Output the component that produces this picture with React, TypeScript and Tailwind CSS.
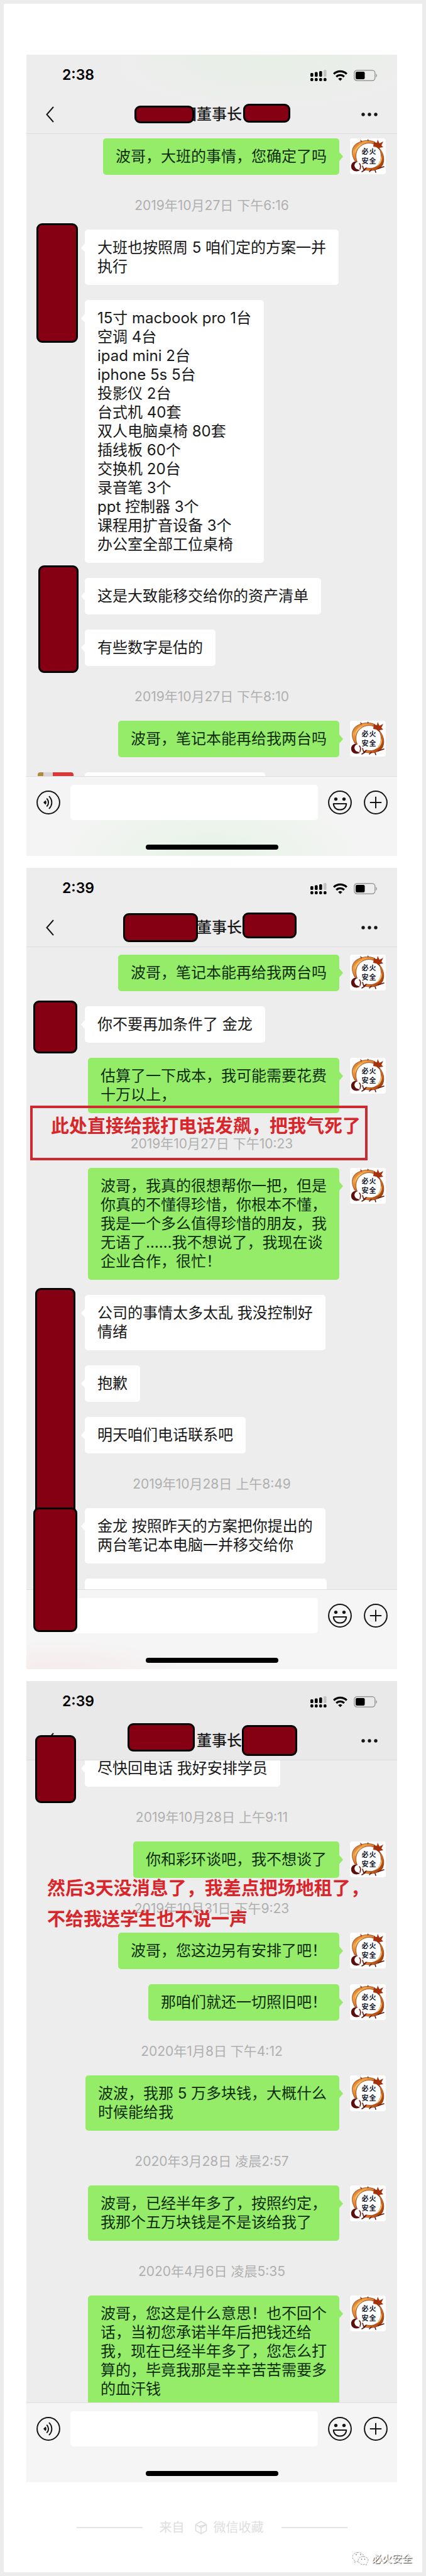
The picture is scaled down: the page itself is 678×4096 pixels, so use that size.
import type { ReactNode } from "react";

type Item =
  | { kind: "me"; lines: string[] }
  | { kind: "them"; lines: string[] }
  | { kind: "time"; text: string };

const me = (...lines: string[]): Item => ({ kind: "me", lines });
const them = (...lines: string[]): Item => ({ kind: "them", lines });
const time = (text: string): Item => ({ kind: "time", text });

function Signal() {
  return (
    <svg width="26" height="18" viewBox="0 0 26 18" aria-hidden="true">
      <rect x="0" y="5" width="4.6" height="6" rx="1.6" />
      <rect x="7" y="3.5" width="4.6" height="7.5" rx="1.6" />
      <rect x="14" y="2" width="4.6" height="9" rx="1.6" />
      <rect x="21" y="0" width="4.6" height="11" rx="1.6" fill="#c4c4c4" />
      <rect x="0" y="13" width="4.6" height="5" rx="1.8" />
      <rect x="7" y="13" width="4.6" height="5" rx="1.8" />
      <rect x="14" y="13" width="4.6" height="5" rx="1.8" />
      <rect x="21" y="13" width="4.6" height="5" rx="1.8" />
    </svg>
  );
}

function Wifi() {
  return (
    <svg width="23" height="18" viewBox="0 0 23 18" fill="none" stroke="#000" strokeWidth="3.2" aria-hidden="true">
      <path d="M1.2 6.6a14.8 14.8 0 0 1 20.6 0" />
      <path d="M5.2 11a9 9 0 0 1 12.6 0" />
      <path d="M11.5 17.6 8.2 14.2a4.8 4.8 0 0 1 6.6 0z" fill="#000" stroke="none" />
    </svg>
  );
}

function Battery() {
  return (
    <svg width="38" height="18" viewBox="0 0 38 18" aria-hidden="true">
      <rect x="0.8" y="0.8" width="33" height="16.4" rx="4.5" fill="none" stroke="#9a9a9a" strokeWidth="1.5" />
      <rect x="3" y="3" width="14.5" height="12" rx="2.2" />
      <path d="M35.4 6.2c2.2.9 2.2 4.7 0 5.6z" fill="#9a9a9a" />
    </svg>
  );
}

function Avatar() {
  return (
    <svg viewBox="0 0 57 57" className="size-[57px] shrink-0 rounded bg-white" role="img" aria-label="必火安全">
      <defs>
        <linearGradient id="flame" x1="0" y1="0" x2="1" y2="1">
          <stop offset="0" stopColor="#b8480c" />
          <stop offset="0.3" stopColor="#f0a347" />
          <stop offset="0.6" stopColor="#d96d17" />
          <stop offset="1" stopColor="#7a1d08" />
        </linearGradient>
      </defs>
      <path
        fill="url(#flame)"
        stroke="#7c2508"
        strokeWidth="0.7"
        d="M8 36C1 25 2 12 13 7c7-4 19-5 27-1l-2 3C27 5 17 10 12 18c-3 6-3 12-1 18z"
      />
      <path
        fill="url(#flame)"
        stroke="#7c2508"
        strokeWidth="0.7"
        d="M46 15c7 7 10 18 6 27-4 8-17 11-28 8l3-3c9 2 16-1 20-8 4-8 3-16-1-24z"
      />
      <path fill="#f7c873" d="M8 24c0-8 5-14 12-15-6 3-10 8-12 15zM50 27c2 8-1 14-8 18 5-5 7-10 8-18z" />
      <path fill="#a3310c" d="m38 6 5 1 1-5 3 6 6-3-3 6 3 3-6 1 1 4-6-5-5-1zM16 2l3 2-1 3zM28 1l2 2-2 2z" />
      <path fill="#5c0f0c" d="M2 46c-1-6 4-11 11-9-5 1-7 5-5 9 2 4 6 3 8 5-6 3-13 1-14-5z" />
      <path
        fill="none"
        stroke="#6d1508"
        strokeWidth="1.6"
        strokeLinecap="round"
        d="M15 40c3 3 2 6 1 9m4-5 2 6 4-3M19 53l5-3m16 1 1 3m4-6 9-3M34 50l-3 3"
      />
      <g fill="#151a2c" fontFamily="'Noto Sans CJK SC', sans-serif" fontSize="11" fontWeight="700" textAnchor="middle">
        <text x="24" y="25">必</text>
        <text x="36" y="25">火</text>
        <text x="24" y="40">安</text>
        <text x="36" y="40">全</text>
      </g>
    </svg>
  );
}

function VoiceIcon() {
  return (
    <svg viewBox="0 0 38 38" className="size-[38px]" fill="none" stroke="#161616" strokeWidth="2" aria-hidden="true">
      <circle cx="19" cy="19" r="17.9" />
      <path d="m11 19 3.4-3.4a4.6 4.6 0 0 1 0 6.8z" fill="#161616" stroke="none" />
      <path d="M16.8 13.2a8.4 8.4 0 0 1 0 11.6M20.5 9.6a13.4 13.4 0 0 1 0 18.8" strokeLinecap="round" />
    </svg>
  );
}

function SmileIcon() {
  return (
    <svg viewBox="0 0 38 38" className="size-[38px]" fill="none" stroke="#161616" strokeWidth="2" aria-hidden="true">
      <circle cx="19" cy="19" r="17.9" />
      <circle cx="12.5" cy="13.6" r="2.7" fill="#161616" stroke="none" />
      <circle cx="25.5" cy="13.6" r="2.7" fill="#161616" stroke="none" />
      <path d="M8.8 21h20.4c0 5.600-4.200 9.600-10.200 9.600S8.800 26.600 8.800 21z" strokeLinejoin="round" />
    </svg>
  );
}

function PlusIcon() {
  return (
    <svg viewBox="0 0 38 38" className="size-[38px]" fill="none" stroke="#161616" strokeWidth="2" aria-hidden="true">
      <circle cx="19" cy="19" r="17.9" />
      <path d="M19 9.800v18.400M9.800 19h18.400" />
    </svg>
  );
}

/* Covers a name or a portrait that must stay private. */
function Cover({ className }: { className: string }) {
  return <span className={`absolute z-10 rounded-[9px] border-[3px] border-black bg-[#860014] ${className}`} />;
}

function Message({ item }: { item: Item }) {
  if (item.kind === "time") {
    return (
      <p className="mt-[34px] text-center text-[21px] leading-[30px] whitespace-nowrap text-[#b0b0b0]">{item.text}</p>
    );
  }
  const mine = item.kind === "me";
  return (
    <div className={mine ? "flex justify-end gap-[17px] pr-[18px]" : "flex pl-[93px]"}>
      <div
        className={`relative rounded-[5px] px-5 py-[14px] text-[24px] leading-[30px] whitespace-nowrap ${
          mine ? "bg-[#95ec69] text-[#0e2e0b]" : "bg-white text-[#191919]"
        }`}
      >
        <svg
          viewBox="0 0 7 16"
          aria-hidden="true"
          className={`absolute top-[21px] h-4 w-[7px] ${
            mine ? "-right-[6px] fill-[#95ec69]" : "-left-[6px] rotate-180 fill-white"
          }`}
        >
          <path d="M0 0 6.300 7a1.500 1.500 0 0 1 0 2L0 16z" />
        </svg>
        {item.lines.map((line) => (
          <p key={line}>{line}</p>
        ))}
      </div>
      {mine && <Avatar />}
    </div>
  );
}

type PhoneProps = {
  id: string;
  clock: string;
  items: Item[];
  firstClass: string;
  headClass: string;
  barClass: string;
  titleExtra: ReactNode;
  peek?: ReactNode;
  children?: ReactNode;
};

function Phone({ id, clock, items, firstClass, headClass, barClass, titleExtra, peek, children }: PhoneProps) {
  return (
    <section className="relative bg-[#ededed]">
      <header className={`border-b border-[#dcdcde] ${headClass}`}>
        <div className="flex h-[65px] items-center pr-[31px] pl-[57px]">
          <span className="flex-1 text-[23px] font-semibold text-black">{clock}</span>
          <div className="flex items-center gap-[10px]">
            <Signal />
            <Wifi />
            <Battery />
          </div>
        </div>
        <div className="grid h-[60px] grid-cols-[1fr_auto_1fr] items-center px-[31px]">
          <button type="button" aria-label="返回" className="justify-self-start">
            <svg width="13" height="32" viewBox="0 0 13 32" fill="none" stroke="#161616" strokeWidth="2">
              <path d="M12 4 1.500 16 12 28" />
            </svg>
          </button>
          <h1 className="relative ml-6 text-[24px] leading-[30px] font-medium text-[#191919]">
            {titleExtra}
            董事长
          </h1>
          <button type="button" aria-label="更多" className="justify-self-end">
            <svg width="26" height="6" viewBox="0 0 26 6" fill="#161616">
              <circle cx="3" cy="3" r="2.700" />
              <circle cx="13" cy="3" r="2.700" />
              <circle cx="23" cy="3" r="2.700" />
            </svg>
          </button>
        </div>
      </header>

      <div className="h-[1021px] overflow-hidden">
        {items.map((item, i) => {
          const gap = i === 0 ? firstClass : items[i - 1].kind === "time" ? "pt-[23px]" : "pt-6";
          return (
            <div key={i} className={item.kind === "time" ? "" : gap}>
              <Message item={item} />
            </div>
          );
        })}
        {peek}
      </div>

      <footer className={`border-t border-[#dedede] pt-[13px] pb-[10px] ${barClass}`}>
        <div className="flex items-center pr-[15px] pl-4">
          <button type="button" aria-label="语音">
            <VoiceIcon />
          </button>
          <input
            id={id}
            type="text"
            aria-label="输入消息"
            className="mx-4 h-14 min-w-0 flex-1 rounded-[5px] bg-white px-4 text-[24px] outline-none"
          />
          <button type="button" aria-label="表情" className="mr-[19px]">
            <SmileIcon />
          </button>
          <button type="button" aria-label="更多功能">
            <PlusIcon />
          </button>
        </div>
        <div className="mx-auto mt-[39px] h-2 w-[211px] rounded-full bg-black" />
      </footer>
      {children}
    </section>
  );
}

const first: Item[] = [
  me("波哥，大班的事情，您确定了吗"),
  time("2019年10月27日 下午6:16"),
  them("大班也按照周 5 咱们定的方案一并", "执行"),
  them(
    "15寸 macbook pro 1台",
    "空调 4台",
    "ipad mini 2台",
    "iphone 5s 5台",
    "投影仪 2台",
    "台式机 40套",
    "双人电脑桌椅 80套",
    "插线板 60个",
    "交换机 20台",
    "录音笔 3个",
    "ppt 控制器 3个",
    "课程用扩音设备 3个",
    "办公室全部工位桌椅",
  ),
  them("这是大致能移交给你的资产清单"),
  them("有些数字是估的"),
  time("2019年10月27日 下午8:10"),
  me("波哥，笔记本能再给我两台吗"),
];

const second: Item[] = [
  me("波哥，笔记本能再给我两台吗"),
  them("你不要再加条件了 金龙"),
  me("估算了一下成本，我可能需要花费", "十万以上，"),
  time("2019年10月27日 下午10:23"),
  me(
    "波哥，我真的很想帮你一把，但是",
    "你真的不懂得珍惜，你根本不懂，",
    "我是一个多么值得珍惜的朋友，我",
    "无语了……我不想说了，我现在谈",
    "企业合作，很忙！",
  ),
  them("公司的事情太多太乱 我没控制好", "情绪"),
  them("抱歉"),
  them("明天咱们电话联系吧"),
  time("2019年10月28日 上午8:49"),
  them("金龙 按照昨天的方案把你提出的", "两台笔记本电脑一并移交给你"),
];

const third: Item[] = [
  them("尽快回电话 我好安排学员"),
  time("2019年10月28日 上午9:11"),
  me("你和彩环谈吧，我不想谈了"),
  time("2019年10月31日 下午9:23"),
  me("波哥，您这边另有安排了吧！"),
  me("那咱们就还一切照旧吧！"),
  time("2020年1月8日 下午4:12"),
  me("波波，我那 5 万多块钱，大概什么", "时候能给我"),
  time("2020年3月28日 凌晨2:57"),
  me("波哥，已经半年多了，按照约定，", "我那个五万块钱是不是该给我了"),
  time("2020年4月6日 凌晨5:35"),
  me(
    "波哥，您这是什么意思！也不回个",
    "话，当初您承诺半年后把钱还给",
    "我，现在已经半年多了，您怎么打",
    "算的，毕竟我那是辛辛苦苦需要多",
    "的血汗钱",
  ),
];

export default function App() {
  return (
    <div className="bg-[#ececec] p-[6px] pb-[7px] font-[Inter,'Noto_Sans_CJK_SC',sans-serif]">
      <main className="bg-white pt-[81px] pr-10 pl-9">
        <div className="flex flex-col gap-[19px]">
          <Phone
            id="message-1"
            clock="2:38"
            items={first}
            firstClass="pt-[7px]"
            headClass="bg-[radial-gradient(ellipse_at_65%_10%,#e7efe6_0%,#ededed_45%)]"
            barClass="bg-[radial-gradient(ellipse_at_50%_100%,#e6f3e5_0%,#f4f4f4_60%)]"
            titleExtra={
              <>
                <span className="absolute right-full">团</span>
                <Cover className="top-px right-[76px] h-[28px] w-[95px]" />
                <Cover className="-top-[2px] left-[74px] h-[30px] w-[75px]" />
              </>
            }
            peek={
              <div className="mt-6 flex">
                <div className="ml-[18px] h-2 w-[57px] rounded-t bg-[linear-gradient(90deg,#b08a3c_0_15%,#d9d4d4_15%_42%,#d8383a_42%)]" />
                <div className="ml-[18px] h-14 w-[287px] rounded-[5px] bg-white" />
              </div>
            }
          >
            <Cover className="top-[268px] left-4 h-[190px] w-[66px]" />
            <Cover className="top-[812px] left-[19px] h-[171px] w-[64px]" />
          </Phone>

          <Phone
            id="message-2"
            clock="2:39"
            items={second}
            firstClass="pt-[12px]"
            headClass="bg-[#ededed]"
            barClass="bg-[radial-gradient(ellipse_at_9%_100%,#f5ebea_0%,#f5f5f5_25%)]"
            titleExtra={
              <>
                <Cover className="-top-[8px] right-[70px] h-[46px] w-[119px]" />
                <Cover className="-top-[9px] left-[73px] h-[41px] w-[86px]" />
              </>
            }
            peek={
              <div className="mt-6 flex">
                <div className="ml-[93px] h-14 w-[385px] rounded-[5px] bg-white" />
              </div>
            }
          >
            <Cover className="top-[211px] left-[11px] h-[84px] w-[70px]" />
            <Cover className="top-[668px] left-[14px] h-[360px] w-[64px]" />
            <Cover className="top-[1017px] left-[11px] h-[198px] w-[70px]" />
            <p className="absolute top-[378px] left-[6px] h-[87px] w-[537px] border-4 border-[#cc2a30] pt-[14px] pl-[29px] text-[29px] leading-[30px] font-bold whitespace-nowrap text-[#d9262b]">
              此处直接给我打电话发飙，把我气死了
            </p>
          </Phone>

          <Phone
            id="message-3"
            clock="2:39"
            items={third}
            firstClass="-mt-[16px]"
            headClass="bg-[#e9e9e9]"
            barClass="bg-[#f5f5f5]"
            titleExtra={
              <>
                <Cover className="-top-[13px] right-[75px] h-[45px] w-[107px]" />
                <Cover className="-top-[10px] left-[72px] h-[49px] w-[88px]" />
              </>
            }
          >
            <Cover className="top-[86px] left-[14px] h-[108px] w-[65px]" />
            <p className="absolute top-[305px] left-[33px] text-[29px] leading-[49px] font-bold whitespace-nowrap text-[#d9262b]">
              然后3天没消息了，我差点把场地租了，
              <br />
              不给我送学生也不说一声
            </p>
          </Phone>
        </div>

        <div className="flex items-center justify-center pt-[57px] text-[20px] leading-[30px] text-[#dedede]">
          <span className="h-[2px] w-[105px] bg-[#e4e4e4]" />
          <span className="ml-[27px]">来自</span>
          <svg viewBox="0 0 20 22" className="mr-[10px] ml-4 h-[22px] w-5" fill="none" stroke="#dcdcdc" strokeWidth="1.600" aria-hidden="true">
            <path d="m10 1.200 8.500 4.900v9.800L10 20.800l-8.500-4.900V6.100z" />
            <path d="m1.500 6.100 5.500 3.200 11.500-3.200M10 20.800v-9.500l8.500-5.200M10 11.300 7 9.300" />
          </svg>
          <span>微信收藏</span>
          <span className="ml-[28px] h-[2px] w-[105px] bg-[#e4e4e4]" />
        </div>

        <div className="-mr-10 flex items-center justify-end gap-[5px] pt-[22px] pr-4 pb-[10px]">
          <svg width="27" height="22" viewBox="0 0 27 22" fill="#fff" stroke="#8a8a8a" strokeWidth="0.800" strokeDasharray="3 1.500" aria-hidden="true">
            <path d="M10 1.500c-5 0-9 3.200-9 7.300 0 2.500 1.400 4.500 3.600 5.900L4 17.500l3.200-1.700c1 .3 1.800.4 2.800.4 5 0 9-3.300 9-7.400s-4-7.300-9-7.300z" />
            <path d="M18 8c-4.500 0-8 2.800-8 6.300s3.500 6.400 8 6.400c.9 0 1.700-.1 2.500-.4l2.800 1.400-.6-2.400c2-1.200 3.300-3 3.300-5 0-3.500-3.500-6.300-8-6.300z" />
            <g fill="#555" stroke="none">
              <circle cx="7" cy="5" r="0.800" />
              <circle cx="14" cy="5" r="0.800" />
              <circle cx="15.500" cy="12.300" r="0.800" />
              <circle cx="20.500" cy="12.300" r="0.800" />
            </g>
          </svg>
          <span className="text-[16px] leading-[24px] text-white [text-shadow:1px_1px_1px_#333]">必火安全</span>
        </div>
      </main>
    </div>
  );
}
